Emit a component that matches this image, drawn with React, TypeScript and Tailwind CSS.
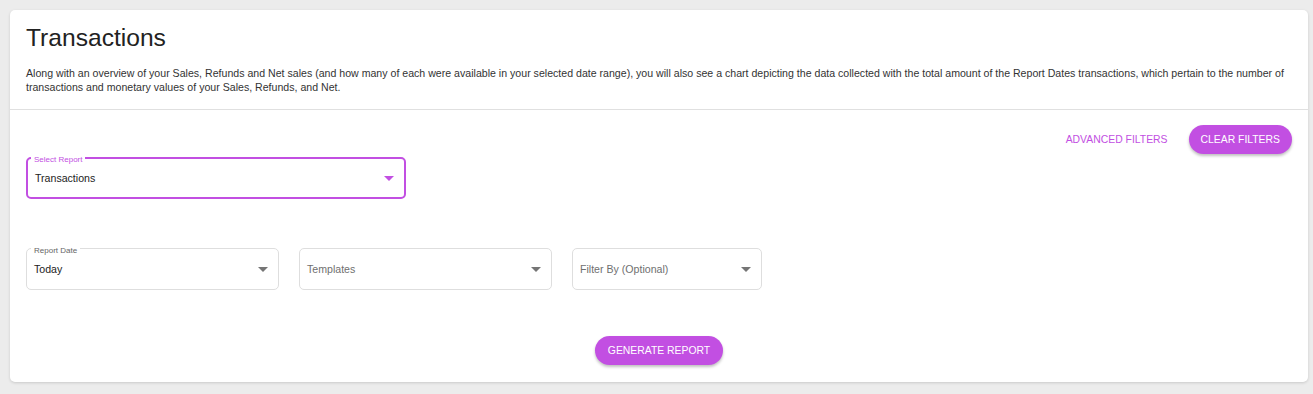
import React from 'react';

function Caret({ color = '#757575' }: { color?: string }) {
  return (
    <svg width="10" height="5" viewBox="0 0 10 5" className="shrink-0">
      <path d="M0 0 L10 0 L5 5 Z" fill={color} />
    </svg>
  );
}

function SelectField({
  label,
  value,
  placeholder,
  width,
  active,
}: {
  label?: string;
  value?: string;
  placeholder?: string;
  width: string;
  active?: boolean;
}) {
  return (
    <div
      className={`relative h-[42px] rounded-[5px] flex items-center justify-between pl-[7px] pr-[10px] ${width} ${
        active ? 'border-2 border-[#c24fe2]' : 'border border-[#dedede]'
      }`}
    >
      {label && (
        <span
          className={`absolute bg-white px-[3px] text-[8px] leading-[10px] ${
            active ? 'text-[#c24fe2] top-[-4px] left-[3px]' : 'text-[#666] top-[-3px] left-[4px]'
          }`}
        >
          {label}
        </span>
      )}
      {value ? (
        <span className="text-[10.6px] text-[#222] mt-[1px]">{value}</span>
      ) : (
        <span className="text-[10.6px] text-[#6f6f6f] mt-[1px]">{placeholder}</span>
      )}
      <Caret color={active ? '#c24fe2' : '#757575'} />
    </div>
  );
}

export default function App() {
  return (
    <div
      className="min-h-[394px] bg-[#ececec] pt-[10px] px-[10px] pb-[12px]"
      style={{ fontFamily: "'Liberation Sans', Arial, sans-serif" }}
    >
      <div className="bg-white rounded-[5px] shadow-[0_1px_3px_rgba(0,0,0,0.15)] w-[1298px] h-[372px] flex flex-col">
        <div className="px-[16px] pt-[13px] pb-[15px] border-b border-[#e0e0e0]">
          <h1 className="text-[24.6px] leading-[30px] text-[#222] font-normal">Transactions</h1>
          <p className="mt-[13px] text-[10.6px] leading-[14px] text-[#333]">
            Along with an overview of your Sales, Refunds and Net sales (and how many of each were available in your
            selected date range), you will also see a chart depicting the data collected with the total amount of the
            Report Dates transactions, which pertain to the number of transactions and monetary values of your Sales,
            Refunds, and Net.
          </p>
        </div>

        <div className="px-[16px] pt-[15px] flex flex-col flex-1">
          <div className="flex justify-end items-center gap-[21px]">
            <button className="text-[10.4px] text-[#c24fe2] uppercase">Advanced Filters</button>
            <button className="h-[29px] px-[12px] rounded-full bg-[#c24fe2] text-white text-[10.4px] uppercase shadow-[0_2px_3px_rgba(0,0,0,0.25)]">
              Clear Filters
            </button>
          </div>

          <div className="mt-[3px]">
            <SelectField label="Select Report" value="Transactions" width="w-[380px]" active />
          </div>

          <div className="mt-[49px] flex gap-[20px]">
            <SelectField label="Report Date" value="Today" width="w-[253px]" />
            <SelectField placeholder="Templates" width="w-[253px]" />
            <SelectField placeholder="Filter By (Optional)" width="w-[190px]" />
          </div>

          <div className="mt-[46px] flex justify-center">
            <button className="h-[29px] px-[12.5px] rounded-full bg-[#c24fe2] text-white text-[10.4px] uppercase shadow-[0_2px_3px_rgba(0,0,0,0.25)]">
              Generate Report
            </button>
          </div>
        </div>
      </div>
    </div>
  );
}
